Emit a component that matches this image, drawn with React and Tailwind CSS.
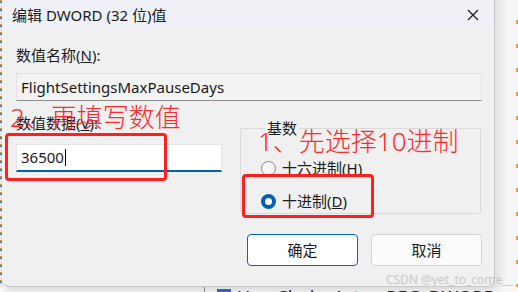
import React from 'react';

const font = "font-['Noto_Sans','Noto_Sans_CJK_SC',sans-serif]";

function Radio({ checked, children }) {
  return (
    <div className="flex items-center h-[20px]">
      {checked ? (
        <span className="w-[15px] h-[15px] rounded-full bg-[#005fb8] flex items-center justify-center">
          <span className="w-[7px] h-[7px] rounded-full bg-white" />
        </span>
      ) : (
        <span className="w-[15px] h-[15px] rounded-full border border-[#8a8a8a] bg-[#f7f7f7]" />
      )}
      <span className="ml-[6px] text-[15px] leading-[20px] text-[#1a1a1a]">{children}</span>
    </div>
  );
}

export default function App() {
  return (
    <div className={`relative w-[518px] h-[292px] overflow-hidden bg-[#f4f4f4] ${font}`}>
      <div className="flex h-[287px]">
        {/* edge of the window behind, left */}
        <div className="w-[2px] bg-[repeating-linear-gradient(to_bottom,#d6902e_0px,#d6902e_2px,#3a6cc0_2px,#3a6cc0_3px,#ececec_3px,#ececec_8px)]" />

        {/* dialog */}
        <div className="w-[493px] h-[287px] rounded-b-[8px] bg-[#f0f0f0] border-r border-b border-[#c8c8c8] shadow-[3px_3px_10px_rgba(0,0,0,0.15)] flex flex-col">
          <div className="h-[30px] bg-[#eff1f6] flex items-center justify-between pl-[10px] pr-[15px]">
            <span className="text-[15px] text-[#1a1a1a]">编辑 DWORD (32 位)值</span>
            <svg width="12" height="12" viewBox="0 0 12 12" className="text-[#1a1a1a]">
              <path d="M1 1L11 11M11 1L1 11" stroke="currentColor" strokeWidth="1.2" />
            </svg>
          </div>

          <div className="pl-[14px] pr-[12px] flex flex-col">
            <div className="mt-[15px] text-[15px] leading-[20px] text-[#1a1a1a]">
              数值名称(<span className="underline">N</span>):
            </div>
            <div className="mt-[8px] h-[28px] bg-[#f3f3f3] border border-[#e3e3e3] border-b-[#8c8c8c] flex items-center pl-[4px] text-[15px] text-[#1a1a1a]">
              FlightSettingsMaxPauseDays
            </div>

            <div className="mt-[12px] grid grid-cols-[206px_241px] gap-x-[18px]">
              <div className="flex flex-col">
                <div className="text-[15px] leading-[20px] text-[#1a1a1a]">
                  数值数据(<span className="underline">V</span>):
                </div>
                <div className="mt-[11px] h-[28px] bg-white border border-[#e6e6e6] border-b-2 border-b-[#005fb8] flex items-center pl-[4px] text-[15px] text-[#1a1a1a]">
                  36500
                  <span className="ml-[1px] w-px h-[17px] bg-black" />
                </div>
              </div>

              <fieldset className="mt-[5px] h-[96px] border border-[#dadada] rounded-[2px] pl-[20px] flex flex-col">
                <legend className="ml-[4px] px-[2px] text-[15px] leading-[20px] text-[#1a1a1a]">基数</legend>
                <div className="mt-[20px] flex flex-col gap-[13px]">
                  <Radio>十六进制(<span className="underline">H</span>)</Radio>
                  <Radio checked>十进制(<span className="underline">D</span>)</Radio>
                </div>
              </fieldset>
            </div>

            <div className="mt-[20px] flex justify-end gap-[13px]">
              <button className="w-[111px] h-[32px] rounded-[4px] bg-white border border-[#0067c0] text-[15px] text-[#1a1a1a]">
                确定
              </button>
              <button className="w-[111px] h-[32px] rounded-[4px] bg-[#fbfbfb] border border-[#d4d4d4] text-[15px] text-[#1a1a1a]">
                取消
              </button>
            </div>
          </div>
        </div>

        {/* window behind, right */}
        <div className="flex-1 flex justify-end bg-[linear-gradient(to_right,#e2e2e2,#f5f5f5_12px)]">
          <div className="w-[2px] bg-[repeating-linear-gradient(to_bottom,transparent_0px,transparent_20px,#e8a040_20px,#e8a040_24px)]" />
        </div>
      </div>

      {/* registry list behind, bottom */}
      <div className="h-[5px] overflow-hidden bg-[#f7f7f7]">
        <div className="ml-[204px] -mt-[1px] flex items-start text-[18px] leading-[22px] text-[#222]">
          <span className="w-px h-[20px] bg-[#888]" />
          <span className="ml-[12px] mt-[3px] w-[14px] h-[14px] bg-[#3b5fc0]" />
          <span className="ml-[6px]">UserChoiceAct...</span>
          <span className="ml-[12px]">REG_DWORD</span>
        </div>
      </div>

      {/* annotations */}
      <div className="absolute left-[5px] top-[133px] w-[162px] h-[48px] border-[3px] border-[#ff1f1f] rounded-[4px]" />
      <div className="absolute left-[242px] top-[174px] w-[132px] h-[44px] border-[3px] border-[#ff1f1f] rounded-[4px]" />
      <div className="absolute left-[10px] top-[103px] text-[26px] leading-[28px] font-light text-[#ff2a2a]">
        2、再填写数值
      </div>
      <div className="absolute left-[258px] top-[127px] text-[26px] leading-[28px] font-light text-[#ff2a2a]">
        1、先选择10进制
      </div>

      <div className="absolute right-[5px] top-[272px] text-[12px] leading-[16px] text-[#c9c9c9]">
        CSDN @yet_to_come__
      </div>
    </div>
  );
}
